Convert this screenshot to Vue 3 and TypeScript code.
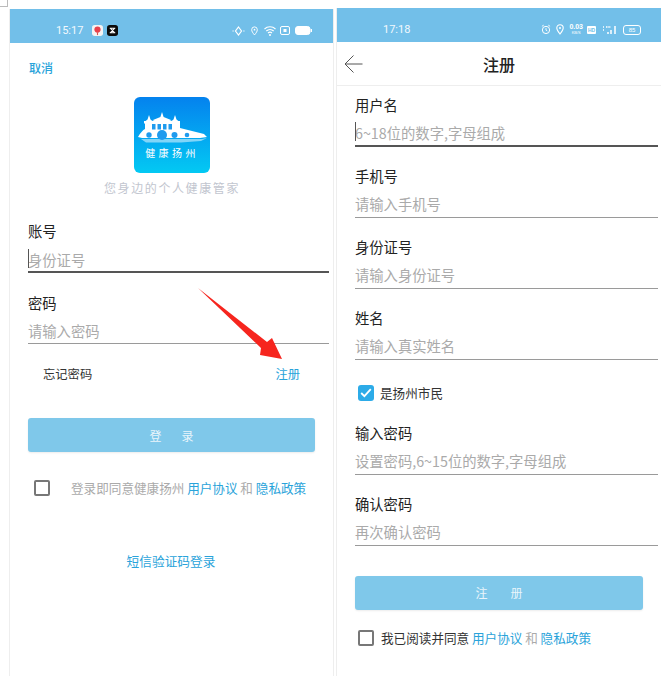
<script setup lang="ts">
interface Field {
  label: string
  placeholder: string
  active?: boolean
}

const topFields: Field[] = [
  { label: '用户名', placeholder: '6~18位的数字,字母组成', active: true },
  { label: '手机号', placeholder: '请输入手机号' },
  { label: '身份证号', placeholder: '请输入身份证号' },
  { label: '姓名', placeholder: '请输入真实姓名' },
]

const bottomFields: Field[] = [
  { label: '输入密码', placeholder: '设置密码,6~15位的数字,字母组成' },
  { label: '确认密码', placeholder: '再次确认密码' },
]
</script>

<template>
  <div class="page">
    <span class="corner"></span>

    <!-- login -->
    <section class="phone login">
      <header class="status">
        <span class="time">15:17</span>
        <svg class="app-icon" width="11" height="11" viewBox="0 0 12 12">
          <rect width="12" height="12" rx="3" fill="#f4f4f4" />
          <circle cx="6" cy="5" r="3.4" fill="#e8414c" />
          <path d="M6 8v3" stroke="#d9534f" stroke-width="1.2" />
        </svg>
        <svg class="app-icon" width="11" height="11" viewBox="0 0 12 12">
          <rect width="12" height="12" rx="3" fill="#0b0b0b" />
          <path d="M3 3.5h6M3 8.5h6M3.5 3.5l5 5M8.5 3.5l-5 5" fill="none" stroke="#fff" stroke-width="1.1" />
        </svg>
        <span class="spacer"></span>
        <svg width="13" height="10" viewBox="0 0 13 10" class="gap-6">
          <path d="M6.5 1l3 4-3 4-3-4zM.5 5h1.2M11.3 5h1.2" fill="none" stroke="#fff" stroke-width="1.2" />
        </svg>
        <svg width="7" height="10" viewBox="0 0 8 11" class="gap-6">
          <path d="M4 10C2 7.5.8 6 .8 4a3.2 3.2 0 0 1 6.4 0c0 2-1.2 3.5-3.2 6z" fill="none" stroke="#fff" stroke-width="1.1" />
          <circle cx="4" cy="4" r="1" fill="#fff" />
        </svg>
        <svg width="12" height="10" viewBox="0 0 12 10" class="gap-4">
          <path d="M.5 3a8 8 0 0 1 11 0M2.3 5a5.5 5.5 0 0 1 7.4 0M4 7a3 3 0 0 1 4 0" fill="none" stroke="#fff" stroke-width="1.1" />
          <circle cx="6" cy="9" r="1" fill="#fff" />
        </svg>
        <svg width="10" height="9" viewBox="0 0 10 9" class="gap-5">
          <rect x=".5" y=".5" width="9" height="8" rx="1.5" fill="none" stroke="#fff" />
          <rect x="3.5" y="3" width="3" height="3" fill="#fff" />
        </svg>
        <svg width="17" height="9" viewBox="0 0 17 9">
          <rect x=".5" y=".5" width="14.5" height="8" rx="2.5" fill="#fff" stroke="#fff" />
          <rect x="15.8" y="3" width="1.2" height="3" fill="#fff" />
        </svg>
      </header>

      <div class="login-body">
        <a class="cancel">取消</a>

        <div class="brand">
          <svg class="logo" width="76" height="76" viewBox="0 0 76 76">
            <defs>
              <linearGradient id="logoFill" x1="0" y1="0" x2="0" y2="1">
                <stop offset="0" stop-color="#0482ee" />
                <stop offset="1" stop-color="#03c9f3" />
              </linearGradient>
            </defs>
            <rect width="76" height="76" rx="6" fill="url(#logoFill)" />
            <g fill="#fff">
              <path d="M28 15l1.6 5 8 3.3-3.6 1.2H22l-3.6-1.2 8-3.3z" />
              <path d="M15 18l1.5 4.5 2.5 2h-8l2.5-2zM41 18l1.5 4.5 2.5 2h-8l2.5-2z" />
              <rect x="10" y="24" width="36" height="2.5" />
              <path d="M4 40c2-4 5-7 7-8v-6h35v5c8 2 16 4 24 6l3 3-7 1H8z" />
              <path d="M7 42h61l5-1-6 3-20 1.5H12z" opacity=".5" />
            </g>
            <g fill="#1f9bee">
              <rect x="18" y="27" width="3.5" height="5.5" />
              <rect x="23.5" y="27" width="3.5" height="5.5" />
              <rect x="29" y="27" width="3.5" height="5.5" />
              <rect x="34.5" y="27" width="3.5" height="5.5" />
              <circle cx="28" cy="38" r="5" />
              <circle cx="15" cy="38" r="2.7" />
              <circle cx="40.5" cy="38" r="3" />
              <circle cx="53" cy="38" r="2.3" />
            </g>
            <text x="38" y="60" class="logo-text">健康扬州</text>
          </svg>
          <p class="tagline">您身边的个人健康管家</p>
        </div>

        <div class="login-field first">
          <label class="field-label">账号</label>
          <div class="field-input active"><i class="caret"></i>身份证号</div>
        </div>
        <div class="login-field">
          <label class="field-label">密码</label>
          <div class="field-input">请输入密码</div>
        </div>

        <div class="links">
          <span class="forgot">忘记密码</span>
          <a class="link">注册</a>
        </div>

        <button class="submit login-submit"><span>登</span><span>录</span></button>

        <div class="agree login-agree">
          <span class="box"></span>
          <span class="agree-text grey">登录即同意健康扬州 <a class="link">用户协议</a> 和 <a class="link">隐私政策</a></span>
        </div>

        <a class="sms link">短信验证码登录</a>
      </div>

      <svg class="red-arrow" width="90" height="74" viewBox="0 0 90 74">
        <path d="M0 0L69 54 74 50 84 71 62 67 63 60z" fill="#f6251e" />
      </svg>
    </section>

    <!-- register -->
    <section class="phone register">
      <header class="status">
        <span class="time">17:18</span>
        <span class="spacer"></span>
        <svg width="10" height="11" viewBox="0 0 11 11" class="gap-5">
          <circle cx="5.5" cy="6" r="4" fill="none" stroke="#fff" stroke-width="1.1" />
          <path d="M5.5 4v2.2l1.4.8M1 2l2-1.3M10 2L8 .7" fill="none" stroke="#fff" />
        </svg>
        <svg width="8" height="11" viewBox="0 0 8 11" class="gap-5">
          <path d="M4 10C2 7.5.8 6 .8 4a3.2 3.2 0 0 1 6.4 0c0 2-1.2 3.5-3.2 6z" fill="none" stroke="#fff" stroke-width="1.1" />
          <circle cx="4" cy="4" r="1" fill="#fff" />
        </svg>
        <span class="speed gap-4"><b>0.03</b><small>KB/S</small></span>
        <span class="hd gap-6">HD</span>
        <svg width="16" height="10" viewBox="0 0 16 10" class="gap-5">
          <path d="M1 2h1M1 5h1M6 9V7M9 9V5M13 9V1" stroke="#fff" stroke-width="1.5" fill="none" />
          <path d="M4 2h5" stroke="#fff" stroke-width="1.4" stroke-dasharray="1.5 .8" />
        </svg>
        <span class="batt">85</span>
      </header>

      <div class="nav">
        <svg class="back" width="19" height="18" viewBox="0 0 19 18">
          <path d="M9.5 .5L1 9l8.500 8.500M1 9h17.500" fill="none" stroke="#555" stroke-width="1" />
        </svg>
        <h1 class="title">注册</h1>
      </div>

      <form class="reg-form">
        <div v-for="f in topFields" :key="f.label" class="reg-field">
          <label class="field-label">{{ f.label }}</label>
          <div class="field-input" :class="{ active: f.active }">
            <i v-if="f.active" class="caret"></i>{{ f.placeholder }}
          </div>
        </div>

        <div class="citizen">
          <span class="box checked">
            <svg width="12" height="10" viewBox="0 0 12 10">
              <path d="M1.2 5l3.2 3.2 6.400-7" fill="none" stroke="#fff" stroke-width="1.8" />
            </svg>
          </span>
          <span class="agree-text dark">是扬州市民</span>
        </div>

        <div v-for="f in bottomFields" :key="f.label" class="reg-field">
          <label class="field-label">{{ f.label }}</label>
          <div class="field-input">{{ f.placeholder }}</div>
        </div>

        <button type="button" class="submit reg-submit"><span>注</span><span>册</span></button>

        <div class="agree reg-agree">
          <span class="box"></span>
          <span class="agree-text dark">我已阅读并同意 <a class="link">用户协议</a> <em>和</em> <a class="link">隐私政策</a></span>
        </div>
      </form>
    </section>
  </div>
</template>

<style>
html,
body {
  margin: 0;
  background: #fff;
}
</style>

<style scoped>
.page {
  position: relative;
  width: 670px;
  height: 676px;
  overflow: hidden;
  display: flex;
  background: #fff;
  font-family: "Noto Sans CJK SC", "Liberation Sans", sans-serif;
  color: #333;
}

.corner {
  position: absolute;
  left: 0;
  top: 0;
  width: 7px;
  height: 6px;
  border-right: 1px solid #bbb;
  border-bottom: 1px solid #bbb;
}

.phone {
  position: relative;
  display: flex;
  flex-direction: column;
  flex: none;
}

.login {
  width: 323px;
  margin: 9px 0 0 10px;
  box-shadow: -1px 0 0 #eee, 1px 0 0 #eee;
}

.register {
  width: 324px;
  margin: 8px 0 0 4px;
  box-shadow: -1px 0 0 #eee;
}

.status {
  flex: none;
  height: 34px;
  box-sizing: border-box;
  display: flex;
  align-items: center;
  background: #72bfe9;
  color: #f1f8fd;
}

.login .status {
  padding: 9px 21px 0 46px;
}

.register .status {
  padding: 9px 20px 0 46px;
}

.time {
  font-family: "Roboto", "Liberation Sans", sans-serif;
  font-size: 11px;
  margin-right: 9px;
}

.app-icon {
  margin-right: 4px;
}

.spacer {
  flex: 1;
}

.gap-4 {
  margin-right: 4px;
}

.gap-5 {
  margin-right: 5px;
}

.gap-6 {
  margin-right: 6px;
}

.speed {
  display: flex;
  flex-direction: column;
  align-items: center;
  font-family: "Liberation Sans", sans-serif;
  line-height: 6px;
  color: #fff;
}

.speed b {
  font-size: 7px;
}

.speed small {
  font-size: 4px;
}

.hd {
  width: 9px;
  height: 8px;
  border-radius: 1px;
  background: #fff;
  color: #72bfe9;
  font: 700 5px/8px "Liberation Sans", sans-serif;
  text-align: center;
}

.batt {
  width: 16px;
  height: 8px;
  border: 1px solid #fff;
  border-radius: 3px;
  font: 6px/8px "Liberation Sans", sans-serif;
  text-align: center;
  color: #fff;
}

.login-body {
  display: flex;
  flex-direction: column;
  padding: 0 4px 0 18px;
}

.cancel {
  margin: 16px 0 0 1px;
  font-size: 12px;
  line-height: 18px;
  color: #29a3da;
  font-weight: 500;
}

.brand {
  display: flex;
  flex-direction: column;
  align-items: center;
  margin: 20px 0 0;
  padding-right: 13px;
}

.logo {
  display: block;
}

.logo-text {
  fill: #fff;
  font-size: 10px;
  letter-spacing: 3.4px;
  text-anchor: middle;
}

.tagline {
  margin: 7px 0 0;
  font-size: 12px;
  line-height: 16px;
  letter-spacing: 1.6px;
  color: #c2c6cf;
}

.login-field {
  margin-top: 20px;
}

.login-field.first {
  margin-top: 25px;
}

.field-label {
  display: block;
  font-size: 14.3px;
  line-height: 20px;
  color: #222;
}

.field-input {
  position: relative;
  height: 26px;
  margin-top: 5px;
  box-sizing: border-box;
  font-size: 14.3px;
  line-height: 26px;
  color: #aaa;
  border-bottom: 1px solid #9a9a9a;
}

.first .field-input {
  margin-top: 6px;
}

.field-input.active {
  border-bottom: 2px solid #555;
}

.caret {
  position: absolute;
  left: 0;
  top: 2px;
  width: 1px;
  height: 19px;
  background: #555;
}

.links {
  display: flex;
  justify-content: space-between;
  padding: 0 29px 0 15px;
  margin-top: 21px;
  font-size: 12.3px;
  line-height: 18px;
}

.forgot {
  color: #333;
}

.link {
  color: #29a3da;
}

.submit {
  display: flex;
  align-items: center;
  justify-content: center;
  height: 34px;
  padding: 0;
  border: none;
  border-radius: 3px;
  background: #7fc8ea;
  color: #e9f5fb;
  font-family: inherit;
  font-size: 12px;
  box-shadow: 0 1px 2px rgba(0, 0, 0, 0.08);
}

.login-submit {
  width: 287px;
  margin-top: 35px;
  gap: 20px;
}

.agree {
  display: flex;
  align-items: center;
}

.box {
  flex: none;
  display: flex;
  align-items: center;
  justify-content: center;
  width: 16px;
  height: 16px;
  box-sizing: border-box;
  border: 2px solid #777;
  border-radius: 2px;
}

.box.checked {
  border: none;
  border-radius: 3px;
  background: #2cabe8;
}

.agree-text {
  font-size: 12.6px;
  line-height: 18px;
  white-space: nowrap;
}

.grey {
  color: #aaa;
}

.dark {
  color: #333;
}

.dark em {
  font-style: normal;
  color: #aaa;
}

.login-agree {
  margin-top: 27px;
  padding-left: 6px;
  gap: 21px;
}

.sms {
  align-self: center;
  margin: 55px 15px 0 0;
  font-size: 12.7px;
  line-height: 18px;
}

.red-arrow {
  position: absolute;
  left: 188px;
  top: 279px;
}

.nav {
  position: relative;
  flex: none;
  height: 44px;
  box-sizing: border-box;
  display: flex;
  align-items: center;
  justify-content: center;
  border-bottom: 1px solid #eee;
}

.back {
  position: absolute;
  left: 7px;
  top: 13px;
}

.title {
  margin: 0;
  font-size: 16px;
  font-weight: 500;
  color: #222;
}

.reg-form {
  display: flex;
  flex-direction: column;
  padding: 8.5px 3px 0 18px;
}

.reg-field {
  height: 71.3px;
}

.reg-field .field-input {
  height: 27px;
}

.citizen {
  display: flex;
  align-items: center;
  gap: 6px;
  height: 18px;
  padding-left: 3px;
  margin: 4.5px 0 21px;
}

.reg-submit {
  width: 288px;
  margin-top: 10px;
  gap: 23px;
}

.reg-agree {
  margin-top: 19px;
  padding-left: 3px;
  gap: 7px;
}
</style>
